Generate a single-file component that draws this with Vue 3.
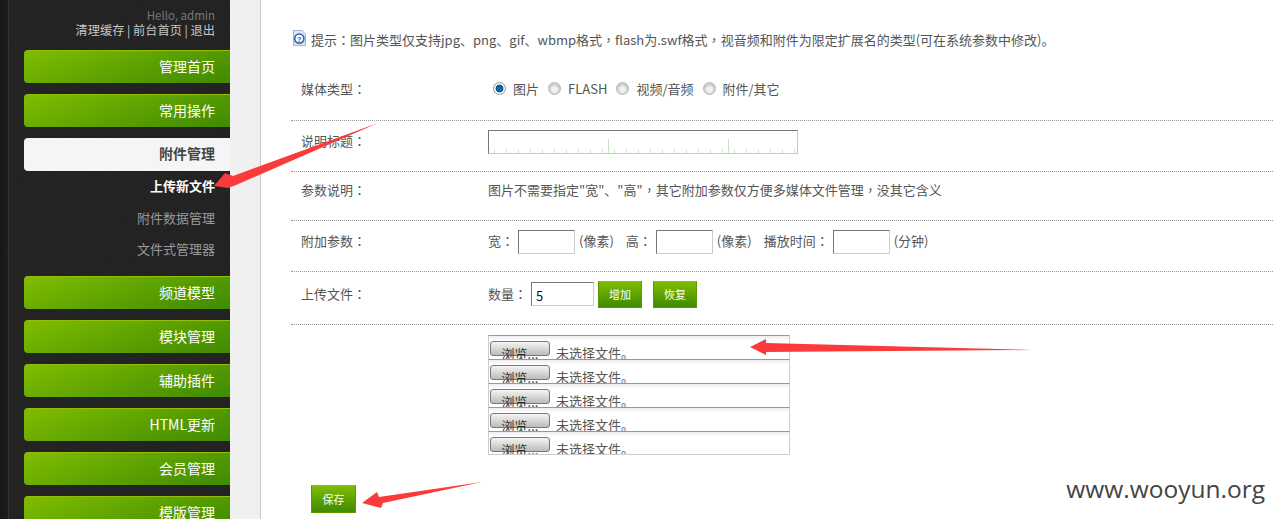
<script setup>
const topMenus = ['管理首页', '常用操作']
const bottomMenus = ['频道模型', '模块管理', '辅助插件', 'HTML更新', '会员管理', '模版管理']
const subs = [
  { t: '上传新文件', on: true },
  { t: '附件数据管理' },
  { t: '文件式管理器' }
]
const media = [
  { t: '图片', on: true },
  { t: 'FLASH' },
  { t: '视频/音频' },
  { t: '附件/其它' }
]
const files = [1, 2, 3, 4, 5]
</script>

<template>
  <div class="page">
    <aside class="side">
      <div class="hello">
        <div class="hi">Hello, admin</div>
        <div class="links">清理缓存 | 前台首页 | 退出</div>
      </div>
      <div v-for="m in topMenus" :key="m" class="menu">{{ m }}</div>
      <div class="menu active">附件管理</div>
      <ul class="subs">
        <li v-for="s in subs" :key="s.t" :class="{ on: s.on }">{{ s.t }}</li>
      </ul>
      <div v-for="m in bottomMenus" :key="m" class="menu">{{ m }}</div>
    </aside>
    <div class="strip"></div>
    <main class="main">
      <div class="tip">
        <svg class="help" width="13" height="16" viewBox="0 0 13 16">
          <path d="M.5.5h8.5l3.5 3.5v11.5H.5z" fill="#dbe6f6" stroke="#9db4d6" />
          <circle cx="6.3" cy="8.6" r="4.6" fill="#fff" stroke="#2a63b5" stroke-width="1.6" />
          <text x="6.3" y="11.6" font-size="8" font-weight="700" text-anchor="middle" fill="#2a63b5" font-family="Liberation Sans, sans-serif">?</text>
        </svg>
        <span>提示<b class="p">：</b>图片类型仅支持jpg、png、gif、wbmp格式<b class="p">，</b>flash为.swf格式<b class="p">，</b>视音频和附件为限定扩展名的类型(可在系统参数中修改)。</span>
      </div>
      <div class="row r1">
        <div class="lab">媒体类型<b class="p">：</b></div>
        <div class="val radios">
          <label v-for="m in media" :key="m.t" class="radio">
            <i :class="{ on: m.on }"></i>{{ m.t }}
          </label>
        </div>
      </div>
      <div class="row r2">
        <div class="lab">说明标题<b class="p">：</b></div>
        <div class="val"><div class="ruler"></div></div>
      </div>
      <div class="row r3">
        <div class="lab">参数说明<b class="p">：</b></div>
        <div class="val">图片不需要指定"宽"、"高"<b class="p">，</b>其它附加参数仅方便多媒体文件管理<b class="p">，</b>没其它含义</div>
      </div>
      <div class="row r4">
        <div class="lab">附加参数<b class="p">：</b></div>
        <div class="val params">
          <span>宽<b class="p">：</b></span><div class="inp"></div><span class="unit">(像素)</span>
          <span class="gap">高<b class="p">：</b></span><div class="inp"></div><span class="unit">(像素)</span>
          <span class="gap">播放时间<b class="p">：</b></span><div class="inp"></div><span class="unit">(分钟)</span>
        </div>
      </div>
      <div class="row r5">
        <div class="lab">上传文件<b class="p">：</b></div>
        <div class="val params">
          <span>数量<b class="p">：</b></span><div class="qty">5</div>
          <button class="gbtn add">增加</button>
          <button class="gbtn reset">恢复</button>
        </div>
      </div>
      <div class="filelist">
        <div v-for="f in files" :key="f" class="file">
          <button class="browse">浏览...</button>
          <span>未选择文件。</span>
        </div>
      </div>
      <button class="gbtn save">保存</button>
    </main>

    <svg class="arrows" width="1273" height="519" viewBox="0 0 1273 519">
      <polygon points="378,123 233,176 225,173 214,186 228,188 236,185" fill="#fb3b3b" />
      <polygon points="750,347 766,339 766,343 1033,350 766,352 766,355" fill="#fb3b3b" />
      <polygon points="362,503 377,492 379,497 482,482 383,503 381,508" fill="#fb3b3b" />
    </svg>
    <div class="mark">www.wooyun.org</div>
  </div>
</template>

<style>
html, body { margin: 0; background: #fff; overflow: hidden; }
</style>

<style scoped>
* { box-sizing: border-box; }
.page {
  position: relative;
  display: flex;
  width: 1273px;
  height: 519px;
  overflow: hidden;
  font-family: "Noto Sans CJK SC", "Open Sans", sans-serif;
  font-size: 13px;
  color: #555;
  background: #fff;
}
.p {
  font-family: "Noto Sans CJK TC", sans-serif;
  font-weight: 400;
}
.side {
  width: 230px;
  flex: none;
  padding-left: 24px;
  background-color: #262626;
  background-image:
    linear-gradient(90deg, #161616 0, #1d1d1d 8px, #353535 8px, #353535 9px, transparent 9px),
    url("data:image/svg+xml,%3Csvg xmlns='http://www.w3.org/2000/svg' width='230' height='519'%3E%3Cfilter id='n'%3E%3CfeTurbulence type='fractalNoise' baseFrequency='0.9' numOctaves='2'/%3E%3CfeColorMatrix values='0 0 0 0 0 0 0 0 0 0 0 0 0 0 0 0 0 0 0.9 -0.25'/%3E%3C/filter%3E%3Crect width='230' height='519' filter='url(%23n)' opacity='.3'/%3E%3C/svg%3E");
}
.hello {
  height: 50px;
  padding: 8px 15px 0 0;
  text-align: right;
  font-size: 12px;
  line-height: 15px;
}
.hi { color: #777; font-size: 11.5px; }
.links { color: #c8c8c8; font-size: 12.2px; }
.menu {
  height: 33px;
  margin-bottom: 11px;
  padding-right: 15px;
  line-height: 31px;
  text-align: right;
  font-size: 14px;
  color: #fff;
  border-radius: 4px 0 0 4px;
  border-top: 1px solid #90c000;
  background: linear-gradient(160deg, #80bd00 0%, #5fa300 50%, #3f8a00 100%);
}
.menu.active {
  margin-bottom: 0;
  color: #444;
  font-weight: 700;
  border-top: 0;
  line-height: 31px;
  background: #f5f5f5;
}
.subs {
  list-style: none;
  margin: 0 0 9px;
  padding: 0 15px 0 0;
  height: 96px;
  text-align: right;
}
.subs li {
  height: 31.7px;
  line-height: 30px;
  color: #999;
}
.subs li.on { color: #fff; font-weight: 700; }
.strip {
  width: 31px;
  flex: none;
  background: #f0f0f0;
  border-right: 1px solid #c8c8c8;
}
.main {
  flex: 1;
  padding-left: 30px;
  min-width: 0;
}
.tip {
  display: flex;
  align-items: center;
  height: 65px;
  padding: 13px 0 0 2px;
  white-space: nowrap;
}
.help { margin: -2px 5px 0 0; flex: none; }
.row {
  display: flex;
  align-items: center;
  padding-left: 10px;
  border-bottom: 1px dotted #999;
}
.r1 { height: 56px; padding-bottom: 9px; }
.r2 { height: 51px; align-items: flex-start; padding-top: 9px; }
.r2 .lab { line-height: 22px; }
.r3 { height: 49px; padding-bottom: 14px; }
.r4 { height: 51px; padding-bottom: 8px; }
.r5 { height: 53px; padding-bottom: 8px; }
.r4 .lab, .r4 .params > span { position: relative; top: -2px; }
.r5 .lab, .r5 .params > span { position: relative; top: -1px; }
.lab { width: 187px; flex: none; }
.val { display: flex; align-items: center; white-space: nowrap; }
.radios { padding-left: 5px; }
.radio { display: flex; align-items: center; margin-right: 9px; }
.radio i {
  width: 13px;
  height: 13px;
  margin-right: 7px;
  border-radius: 50%;
  border: 1px solid #b5b5b5;
  background: radial-gradient(circle at 50% 60%, #f2f2f2 0 25%, #c8c8c8 65%, #eee 100%);
}
.radio i.on {
  background: radial-gradient(circle, #0b6aa8 0 35%, #063f66 45%, #fff 55%, #ccc 100%);
  border-color: #999;
}
.ruler {
  width: 310px;
  height: 24px;
  border: 1px solid #c8c8c8;
  border-top-color: #777;
  border-left-color: #777;
  background-color: #fff;
  background-image:
    linear-gradient(90deg, #bfe5bb 1px, transparent 1px),
    linear-gradient(90deg, #c9ebc6 1px, transparent 1px);
  background-repeat: repeat-x;
  background-size: 120px 14px, 12px 4px;
  background-position: 119px bottom, 5px bottom;
}
.inp {
  width: 57px;
  height: 24px;
  margin-left: 4px;
  border: 1px solid #ccc;
  border-top-color: #777;
  border-left-color: #777;
  background: #fff;
}
.unit { margin-left: 4px; }
.gap { margin-left: 12px; }
.qty {
  width: 63px;
  height: 24px;
  margin: 0 4px 0 4px;
  padding: 1px 0 0 4px;
  line-height: 23px;
  font-size: 13px;
  color: #111;
  border: 1px solid #ccc;
  border-top-color: #777;
  border-left-color: #777;
}
.gbtn {
  display: block;
  padding: 0;
  font: inherit;
  font-size: 11px;
  color: #fff;
  border: 1px solid #5b9a00;
  border-top-color: #8cc000;
  background: linear-gradient(#7fbd00, #3f8a00);
}
.add { width: 44px; height: 27px; }
.reset { width: 44px; height: 27px; margin-left: 11px; }
.filelist {
  width: 302px;
  margin: 10px 0 0 197px;
}
.file {
  display: flex;
  height: 24px;
  overflow: hidden;
  padding: 5px 0 0 1px;
  border: 1px solid #ccc;
  border-top-color: #999;
  border-bottom: 0;
  background: linear-gradient(#eee, #fff 5px);
  white-space: nowrap;
}
.file:last-child { border-bottom: 1px solid #ccc; }
.browse {
  width: 60px;
  height: 15px;
  flex: none;
  padding: 9px 0 0;
  font: inherit;
  font-size: 13px;
  line-height: 5px;
  color: #333;
  border: 1px solid #777;
  border-radius: 3px;
  background: linear-gradient(#f5f5f5, #bbb);
  overflow: visible;
}
.file span { margin: 2px 0 0 6px; line-height: 20px; }
.save {
  width: 45px;
  height: 28px;
  margin: 30px 0 0 20px;
}
.arrows {
  position: absolute;
  left: 0;
  top: 0;
  pointer-events: none;
}
.mark {
  position: absolute;
  right: 8px;
  bottom: 13px;
  font-family: "Open Sans", sans-serif;
  font-size: 24.5px;
  line-height: 34px;
  color: #444;
}
</style>
